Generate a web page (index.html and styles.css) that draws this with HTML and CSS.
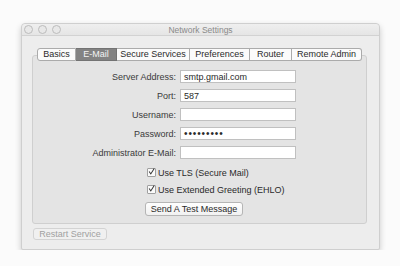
FILE: index.html
```html
<!DOCTYPE html>
<html lang="en">
<head>
    <meta charset="UTF-8">
    <title>Network Settings</title>
    <link rel="stylesheet" href="styles.css">
</head>
<body>
    <div class="window">
        <div class="titlebar">
            <div class="lights">
                <span class="light"></span>
                <span class="light"></span>
                <span class="light"></span>
            </div>
            <div class="title">Network Settings</div>
        </div>
        <div class="content">
            <div class="tabs">
                <span class="tab t-basics">Basics</span>
                <span class="tab t-mail selected">E-Mail</span>
                <span class="tab t-secure">Secure Services</span>
                <span class="tab t-prefs">Preferences</span>
                <span class="tab t-router">Router</span>
                <span class="tab t-remote">Remote Admin</span>
            </div>
            <div class="panel">
                <div class="form">
                    <label>Server Address:</label>
                    <div class="field">smtp.gmail.com</div>
                    <label>Port:</label>
                    <div class="field">587</div>
                    <label>Username:</label>
                    <div class="field"></div>
                    <label>Password:</label>
                    <div class="field dots">&#8226;&#8226;&#8226;&#8226;&#8226;&#8226;&#8226;&#8226;&#8226;</div>
                    <label>Administrator E-Mail:</label>
                    <div class="field"></div>
                </div>
                <div class="checks">
                    <div class="check">
                        <span class="box"><svg width="9" height="9" viewBox="0 0 9 9"><path d="M1.5 4.5 L3.6 7.6 L8 0.6" fill="none" stroke="#333" stroke-width="1.3"/></svg></span>
                        Use TLS (Secure Mail)
                    </div>
                    <div class="check">
                        <span class="box"><svg width="9" height="9" viewBox="0 0 9 9"><path d="M1.5 4.5 L3.6 7.6 L8 0.6" fill="none" stroke="#333" stroke-width="1.3"/></svg></span>
                        Use Extended Greeting (EHLO)
                    </div>
                    <button class="btn test">Send A Test Message</button>
                </div>
            </div>
            <button class="btn restart">Restart Service</button>
        </div>
    </div>
</body>
</html>
```

FILE: styles.css
```css
body {
    margin: 0;
    padding: 23px 20px 0 21px;
    background: #fbfbfb;
    font-family: "Liberation Sans", Arial, sans-serif;
    font-size: 9px;
    color: #3a3a3a;
}

.window {
    width: 357px;
    height: 225px;
    background: #ededed;
    border: 1px solid #cfcfcf;
    border-radius: 4px 4px 2px 2px;
    box-shadow: 0 3px 6px rgba(0,0,0,0.2);
}

.titlebar {
    height: 11px;
    position: relative;
    background: linear-gradient(#efefef, #e5e5e5);
    border-bottom: 1px solid #d2d2d2;
    border-radius: 4px 4px 0 0;
    display: flex;
    align-items: center;
    justify-content: center;
}

.lights {
    position: absolute;
    left: 2px;
    top: 1px;
    display: flex;
    gap: 5px;
}

.light {
    width: 7px;
    height: 7px;
    border: 1px solid #bcbcbc;
    border-radius: 50%;
    background: #e8e8e8;
}

.title {
    color: #8a8a8a;
    font-size: 8.5px;
    margin-top: 1px;
}

.content {
    padding: 12px 12px 0 10px;
}

.tabs {
    display: flex;
    justify-content: center;
    position: relative;
    z-index: 1;
    margin-bottom: -6px;
}

.tab {
    height: 11px;
    line-height: 11px;
    background: #fbfbfb;
    border: 1px solid #ababab;
    border-left: none;
    text-align: center;
    color: #2a2a2a;
}

.tab:first-child {
    border-left: 1px solid #ababab;
    border-radius: 3px 0 0 3px;
}

.tab:last-child {
    border-radius: 0 3px 3px 0;
}

.tab.selected {
    background: #838383;
    color: #f4f4f4;
    border-color: #737373;
}

.t-basics { width: 37px; }
.t-mail { width: 40px; }
.t-secure { width: 72px; }
.t-prefs { width: 59px; }
.t-router { width: 41px; }
.t-remote { width: 69px; }

.panel {
    height: 167px;
    background: #e4e4e4;
    border: 1px solid #cfcfcf;
    border-radius: 3px;
}

.form {
    display: grid;
    grid-template-columns: 143px 116px;
    column-gap: 4px;
    row-gap: 6px;
    padding-top: 14px;
}

.form label {
    text-align: right;
    height: 13px;
    line-height: 14px;
}

.field {
    box-sizing: border-box;
    height: 13px;
    line-height: 12px;
    padding-left: 3px;
    background: #fff;
    border: 1px solid #c0c0c0;
    color: #2a2a2a;
}

.dots {
    font-size: 10px;
    letter-spacing: 0.9px;
}

.checks {
    display: flex;
    flex-direction: column;
    align-items: flex-start;
    padding-left: 114px;
    margin-top: 9px;
}

.check {
    display: flex;
    align-items: center;
    gap: 2px;
    height: 9px;
    margin-bottom: 8px;
    color: #2a2a2a;
}

.box {
    box-sizing: border-box;
    width: 9px;
    height: 9px;
    background: #fafafa;
    border: 1px solid #a0a0a0;
    border-radius: 1px;
    display: flex;
    overflow: visible;
}

.box svg {
    margin: -2px 0 0 0;
}

.btn {
    font-family: "Liberation Sans", Arial, sans-serif;
    font-size: 9px;
    background: linear-gradient(#fefefe, #f1f1f1);
    border: 1px solid #b5b5b5;
    border-radius: 3px;
    padding: 0;
}

.test {
    width: 98px;
    height: 14px;
    margin-left: -2px;
    color: #2a2a2a;
}

.restart {
    display: block;
    width: 74px;
    height: 12px;
    margin-top: 4px;
    margin-left: 1px;
    color: #a0a0a0;
    background: #f0f0f0;
    border-color: #d3d3d3;
}
```
